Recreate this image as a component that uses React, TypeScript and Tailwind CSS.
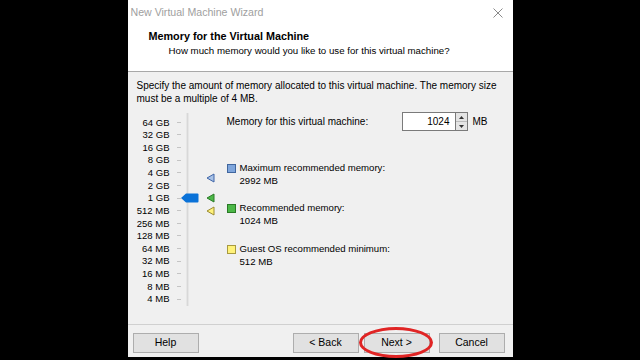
const scale = [
  "64 GB",
  "32 GB",
  "16 GB",
  "8 GB",
  "4 GB",
  "2 GB",
  "1 GB",
  "512 MB",
  "256 MB",
  "128 MB",
  "64 MB",
  "32 MB",
  "16 MB",
  "8 MB",
  "4 MB",
];

function Marker({ fill, stroke }: { fill: string; stroke: string }) {
  return (
    <svg width="9" height="10" viewBox="0 0 9 10">
      <polygon points="8,1 8,9 1,5" fill={fill} stroke={stroke} strokeWidth="1" strokeLinejoin="round" />
    </svg>
  );
}

function Legend({ color, border, title, value }: { color: string; border: string; title: string; value: string }) {
  return (
    <div className="flex">
      <div className="w-[13px] pt-[2px]">
        <div className="w-[9px] h-[9px] border" style={{ background: color, borderColor: border }} />
      </div>
      <div className="leading-[12.5px] text-[9.6px]">
        <div>{title}</div>
        <div>{value}</div>
      </div>
    </div>
  );
}

function Button({ label }: { label: string }) {
  return (
    <div className="w-[66px] h-[20px] bg-[#e1e1e1] border border-[#adadad] flex items-center justify-center text-[10.5px]">
      {label}
    </div>
  );
}

export default function App() {
  return (
    <div
      className="w-[640px] h-[360px] bg-black flex justify-center text-black"
      style={{ fontFamily: '"Liberation Sans", Arial, sans-serif' }}
    >
      <div className="w-[385px] h-[357px] bg-white flex flex-col">
        {/* title bar */}
        <div className="h-[26px] flex items-center justify-between pl-[3px] pr-[10px]">
          <span className="text-[10.6px] text-[#a0a0a0]">New Virtual Machine Wizard</span>
          <svg width="10" height="10" viewBox="0 0 10 10">
            <path d="M0.5 0.5 L9.5 9.5 M9.5 0.5 L0.5 9.5" stroke="#8a8a8a" strokeWidth="1" />
          </svg>
        </div>

        {/* header */}
        <div className="h-[46px] border-b border-[#a8a8a8] pt-[4px]">
          <div className="pl-[21px] text-[10.8px] font-bold leading-[13px]">Memory for the Virtual Machine</div>
          <div className="pl-[41px] text-[9.7px] leading-[15px]">
            How much memory would you like to use for this virtual machine?
          </div>
        </div>

        {/* content */}
        <div className="flex-1 bg-[#f0f0f0] flex flex-col text-[10px]">
          <p className="pt-[7px] pl-[9px] leading-[13px]">
            Specify the amount of memory allocated to this virtual machine. The memory size
            <br />
            must be a multiple of 4 MB.
          </p>

          <div className="mt-[7px] flex">
            {/* scale labels with ticks */}
            <div className="pl-[9px] pt-[4px] flex flex-col">
              {scale.map((s) => (
                <div key={s} className="h-[12.64px] w-[44px] flex items-center justify-end">
                  <span className="text-[9.5px] leading-none">{s}</span>
                  <div className="ml-[7px] w-[4px] h-px bg-[#c4c4c4]" />
                </div>
              ))}
            </div>

            {/* slider */}
            <div className="relative w-[46px]">
              <div className="ml-[5px] mt-[1px] w-[3px] h-[193px] bg-[#d8d8d8] border-x border-[#e6e6e6]" />
              <svg className="absolute left-0 top-[81px]" width="18" height="10" viewBox="0 0 18 10">
                <path d="M0 5 L5 0.5 L16.5 0.5 Q17.5 0.5 17.5 1.5 L17.5 8.5 Q17.5 9.5 16.5 9.5 L5 9.5 Z" fill="#0a72d8" />
              </svg>
              <div className="absolute left-[25px] top-[61px]">
                <Marker fill="#a8c2e6" stroke="#3f65a8" />
              </div>
              <div className="absolute left-[25px] top-[81px]">
                <Marker fill="#4cb848" stroke="#2a7a26" />
              </div>
              <div className="absolute left-[25px] top-[94px]">
                <Marker fill="#fff27a" stroke="#9a8a30" />
              </div>
            </div>

            {/* right side */}
            <div className="flex flex-col">
              <div className="h-[19px] flex items-center">
                <span className="w-[175px]">Memory for this virtual machine:</span>
                <div className="h-[19px] w-[54px] bg-white border border-[#7a7a7a] flex items-center justify-end pr-[5px]">
                  1024
                </div>
                <div className="h-[19px] w-[12px] flex flex-col border-y border-r border-[#7a7a7a]">
                  <div className="flex-1 bg-[#e4e4e4] border-b border-[#bcbcbc] flex items-center justify-center">
                    <svg width="5" height="3" viewBox="0 0 5 3">
                      <polygon points="0,3 5,3 2.5,0" fill="#333" />
                    </svg>
                  </div>
                  <div className="flex-1 bg-[#e4e4e4] flex items-center justify-center">
                    <svg width="5" height="3" viewBox="0 0 5 3">
                      <polygon points="0,0 5,0 2.5,3" fill="#333" />
                    </svg>
                  </div>
                </div>
                <span className="ml-[5px]">MB</span>
              </div>

              <div className="mt-[31px]">
                <Legend color="#7fa6dc" border="#40669e" title="Maximum recommended memory:" value="2992 MB" />
              </div>
              <div className="mt-[15px]">
                <Legend color="#4cb848" border="#2a7a26" title="Recommended memory:" value="1024 MB" />
              </div>
              <div className="mt-[16px]">
                <Legend color="#fff27a" border="#a89a40" title="Guest OS recommended minimum:" value="512 MB" />
              </div>
            </div>
          </div>
        </div>

        {/* footer */}
        <div className="h-[33px] bg-[#f0f0f0] border-t border-[#d0d0d0] flex items-start pt-[8px] pl-[5px]">
          <Button label="Help" />
          <div className="ml-[94px]">
            <Button label="< Back" />
          </div>
          <div className="ml-[5px] relative">
            <Button label="Next >" />
            <div className="absolute -left-[5px] -top-[6px] w-[74px] h-[31px] rounded-[50%] border-[3px] border-[#e02424]" />
          </div>
          <div className="ml-[9px]">
            <Button label="Cancel" />
          </div>
        </div>
      </div>
    </div>
  );
}
